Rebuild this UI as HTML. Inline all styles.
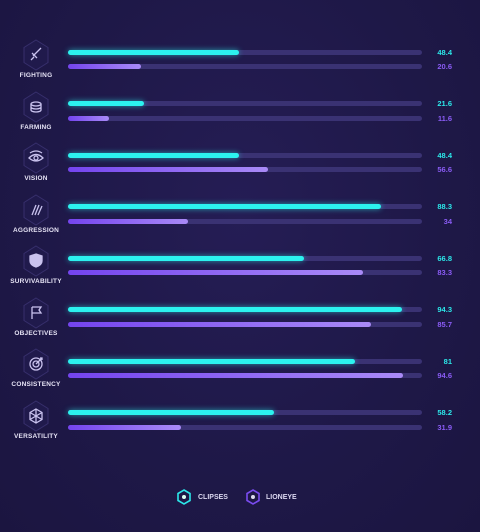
<!DOCTYPE html><html><head><style>
body{margin:0;width:480px;height:532px;background:radial-gradient(ellipse at 50% 40%,#251d55 0%,#1e1847 60%,#1b1540 100%);font-family:"Liberation Sans",sans-serif;position:relative;overflow:hidden}
.a{position:absolute}
.tr{position:absolute;left:68px;width:354px;height:5px;border-radius:3px;background:#3a3273}
.f{height:5px;border-radius:3px}
.c{background:#2cf2ef;box-shadow:0 0 6px rgba(44,242,239,.6)}
.p{background:linear-gradient(90deg,#7444ee,#a98af7)}
.v{position:absolute;right:28px;font-size:7.5px;font-weight:bold}
.lb{position:absolute;width:72px;left:0;text-align:center;font-size:6.5px;font-weight:bold;color:#e6e3f5;letter-spacing:.2px}
.ic{position:absolute;left:22px;width:28px;height:32px}
.lg{position:absolute;top:494px;font-size:7px;font-weight:bold;color:#dcd8f0}
</style></head><body>
<div id="r"></div>
<script>
var d=[["FIGHTING",48.4,20.6],["FARMING",21.6,11.6],["VISION",48.4,56.6],["AGGRESSION",88.3,34],["SURVIVABILITY",66.8,83.3],["OBJECTIVES",94.3,85.7],["CONSISTENCY",81,94.6],["VERSATILITY",58.2,31.9]];
var ic=['<path d="M19 9 L11 17 M10 14 L15 19 M12 18 L9 21" />','<ellipse cx="14" cy="13" rx="5" ry="2"/><path d="M9 13v6c0 1 2 2 5 2s5-1 5-2v-6M9 16c0 1 2 2 5 2s5-1 5-2"/>','<path d="M7 16q7-7 14 0q-7 6-14 0z"/><circle cx="14" cy="16" r="2"/><path d="M8 11q6-4 12 0"/>','<path d="M10 21l4-10M13 21l4-10M16 21l4-9"/>','<path d="M14 9l6 2v5c0 3-3 5-6 6c-3-1-6-3-6-6v-5z" fill="#c9c2ee"/>','<path d="M10 22V10M10 10h9l-2 3 2 3h-9"/>','<circle cx="14" cy="16" r="6"/><circle cx="14" cy="16" r="3"/><path d="M14 16l6-6M18 10h2v2"/>','<path d="M14 9l6 3.5v7L14 23l-6-3.5v-7zM14 9v14M8 12.5l12 7M20 12.5l-12 7"/>'];
var h='';
d.forEach(function(r,i){var y=i*51.5;
h+='<svg class="ic" style="top:'+(39+y)+'px" viewBox="0 0 28 32"><path d="M14 1L26 8.5V23.5L14 31L2 23.5V8.5Z" fill="#201a4c" stroke="#372f6c" stroke-width="1"/><g fill="none" stroke="#c9c2ee" stroke-width="1.3">'+ic[i]+'</g></svg>';
h+='<div class="lb" style="top:'+(72+y)+'px">'+r[0]+'</div>';
h+='<div class="tr" style="top:'+(49.5+y)+'px"><div class="f c" style="width:'+r[1]+'%"></div></div>';
h+='<div class="tr" style="top:'+(64+y)+'px"><div class="f p" style="width:'+r[2]+'%"></div></div>';
h+='<div class="v" style="top:'+(47.5+y)+'px;color:#2ce8ea">'+r[1]+'</div>';
h+='<div class="v" style="top:'+(62+y)+'px;color:#8a5cf5">'+r[2]+'</div>';});
document.getElementById('r').innerHTML=h;
</script>
<svg class="a" style="left:177px;top:489px" width="14" height="16" viewBox="0 0 14 16"><path d="M7 1L13 4.5V11.5L7 15L1 11.5V4.5Z" fill="none" stroke="#2ce8ea" stroke-width="1.6"/><circle cx="7" cy="8" r="2" fill="#dfe"/></svg>
<div class="lg" style="left:198px">CLIPSES</div>
<svg class="a" style="left:246px;top:489px" width="14" height="16" viewBox="0 0 14 16"><path d="M7 1L13 4.5V11.5L7 15L1 11.5V4.5Z" fill="none" stroke="#7a4cf0" stroke-width="1.6"/><circle cx="7" cy="8" r="2" fill="#dde"/></svg>
<div class="lg" style="left:266px">LIONEYE</div>
</body></html>
